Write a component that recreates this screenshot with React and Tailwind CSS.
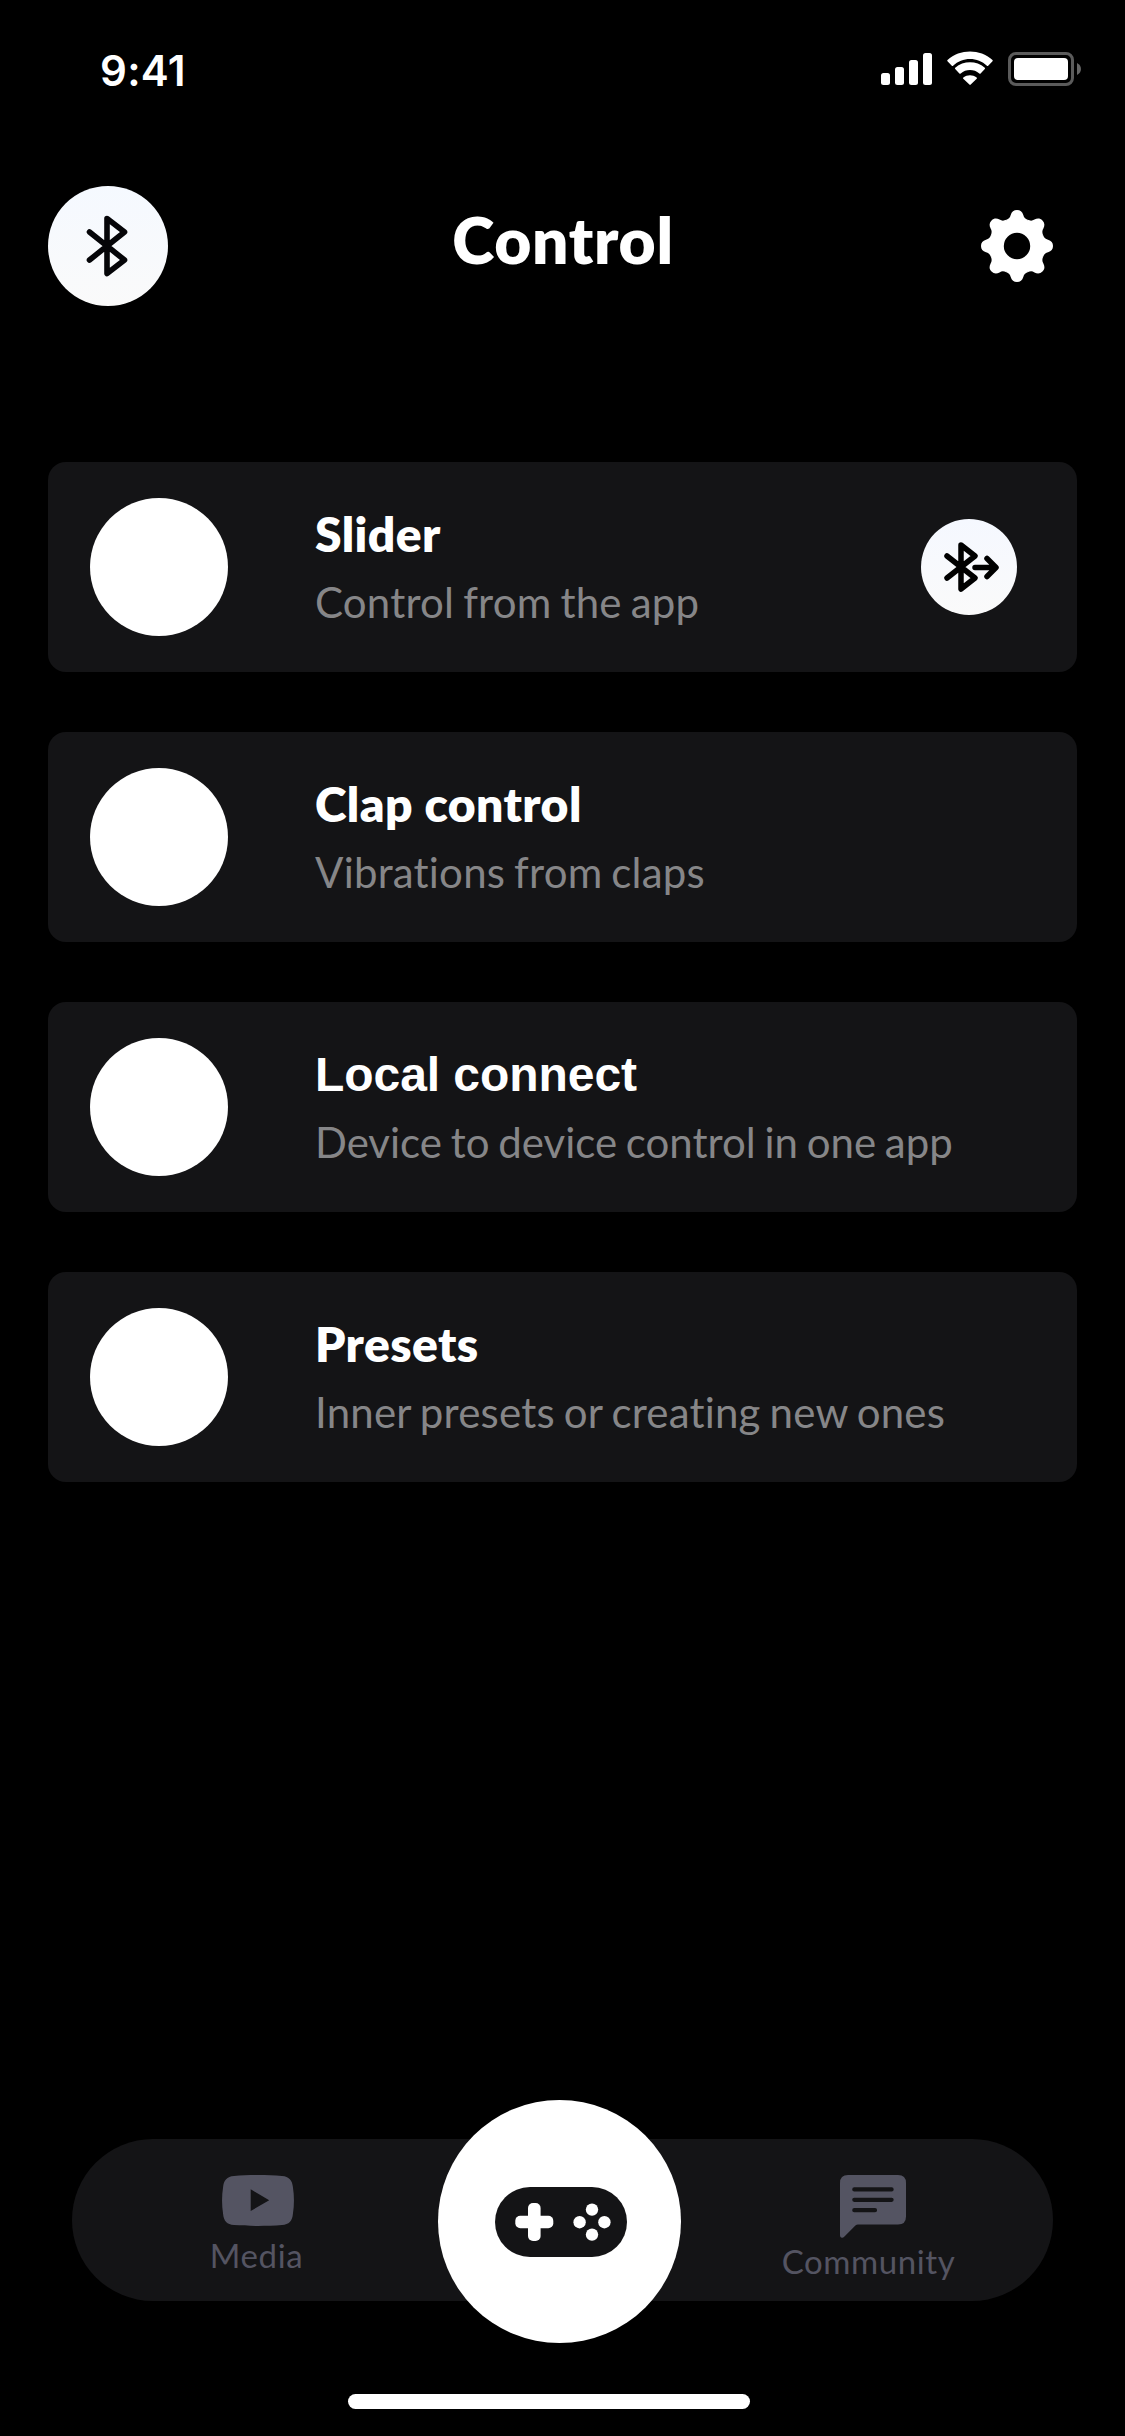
const CARDS = [
  { title: "Slider", text: "Control from the app", linked: true },
  { title: "Clap control", text: "Vibrations from claps" },
  { title: "Local connect", text: "Device to device control in one app", grotesque: true },
  { title: "Presets", text: "Inner presets or creating new ones" },
];

function StatusBar() {
  return (
    <div className="flex h-[132px] items-start justify-between pl-[100px] pr-[44px]">
      <span className="mt-[46px] font-['Inter',sans-serif] text-[42px] font-semibold leading-[50px] tracking-[0.300px]">9:41</span>
      <svg className="mt-[48px] h-[42px] w-[204px]" viewBox="877 48 204 42" fill="white">
        <rect x="881" y="73" width="9" height="12" rx="2.5" />
        <rect x="895" y="67" width="9" height="18" rx="2.5" />
        <rect x="909" y="60" width="9" height="25" rx="2.5" />
        <rect x="923" y="53" width="9" height="32" rx="2.5" />
        <path d="M970 59c6.300 0 12.300 2.400 16.900 6.700.4.300.9.300 1.300 0l4.300-4.400c.4-.4.4-1 0-1.300-12.600-11.300-32.400-11.300-45 0-.4.300-.4.900 0 1.300l4.300 4.400c.4.300.9.300 1.300 0C957.700 61.400 963.700 59 970 59z" />
        <path d="M970 70c3.400 0 6.700 1.200 9.300 3.400.4.300.9.300 1.300 0l4.200-4.300c.4-.4.4-1 0-1.300-8.400-7.300-21.200-7.300-29.600 0-.4.300-.4.900 0 1.300l4.200 4.300c.4.300.9.300 1.300 0C963.300 71.200 966.600 70 970 70z" />
        <path d="M976.700 78.700c.4-.4.4-1-.1-1.300-3.900-2.900-9.300-2.900-13.200 0-.5.300-.5.900-.1 1.300l6.100 5.900c.4.400.9.400 1.300 0z" />
        <rect x="1009.500" y="53.500" width="63" height="31" rx="6.500" fill="none" stroke="#5b5b5b" strokeWidth="3" />
        <rect x="1014" y="58" width="54" height="22" rx="4" />
        <path d="M1077 63c5.300 2.500 5.300 9.500 0 12z" fill="#666" />
      </svg>
    </div>
  );
}

function Header() {
  return (
    <header className="mt-[54px] flex h-[120px] items-center justify-between pl-12 pr-[72px]">
      <button className="flex size-[120px] items-center justify-center rounded-full bg-linear-to-b from-[#f5f9ff] to-[#fafafa]">
        <svg className="size-[72px]" viewBox="0 0 72 72" fill="none" stroke="#050508" strokeWidth="5.600" strokeLinecap="round" strokeLinejoin="round">
          <path d="M17.500 22L52.500 50L35 63.500V8.500L52.500 22L17.500 50" />
        </svg>
      </button>
      <h1 className="mb-[12px] mr-[23px] font-['Lato',sans-serif] text-[64px] font-extrabold leading-[76px] tracking-[0.700px]">Control</h1>
      <svg className="size-[72px]" viewBox="-36 -36 72 72">
        <g fill="white">
          <circle r="26" />
          {[0, 45, 90, 135, 180, 225, 270, 315].map((a) => (
            <path key={a} transform={`rotate(${a})`} d="M-11-26C-8-27.300-7-28.500-6.300-31C-5.300-34.300-3.200-36 0-36S5.300-34.300 6.300-31C7-28.500 8-27.300 11-26L0 0z" />
          ))}
        </g>
        <circle r="13.200" fill="black" />
      </svg>
    </header>
  );
}

function ModeCard({ title, text, linked, grotesque }) {
  return (
    <button className="flex h-[210px] items-center rounded-[18px] bg-[#141416] pl-[42px] pr-[60px] text-left">
      <span className="size-[138px] shrink-0 rounded-full bg-white" />
      <span className="mb-[2px] ml-[87px] flex flex-1 flex-col whitespace-nowrap">
        {grotesque ? (
          <>
            <span className="pt-px font-['Liberation_Sans',sans-serif] text-[48px] font-bold leading-[71px] tracking-[-0.060px]">{title}</span>
            <span className="font-['Lato',sans-serif] text-[42px] leading-[64px] text-[#868688] [font-variant-ligatures:none] [word-spacing:-2px]">{text}</span>
          </>
        ) : (
          <>
            <span className="font-['Lato',sans-serif] text-[48px] font-extrabold leading-[72px] tracking-[0.400px]">{title}</span>
            <span className="font-['Lato',sans-serif] text-[42px] leading-[64px] tracking-[0.200px] text-[#868688] [font-variant-ligatures:none] [word-spacing:-2px]">{text}</span>
          </>
        )}
      </span>
      {linked && (
        <span className="flex size-24 items-center justify-center rounded-full bg-linear-to-b from-[#f5f8ff] to-[#fafafa]">
          <svg className="size-24" viewBox="921 519 96 96" fill="none" stroke="black" strokeWidth="5.500" strokeLinecap="round" strokeLinejoin="round">
            <path d="M947 556L975 578L961 589V545L975 556L947 578M975 567.500H995M987 558.500L996 567.500L987 576.500" />
          </svg>
        </span>
      )}
    </button>
  );
}

function MediaIcon() {
  return (
    <svg className="ml-[6px] h-[51px] w-[72px]" viewBox="0 0 72 51" fill="#545462">
      <path fillRule="evenodd" d="M12 .9C27-.3 45-.3 60 .9C67 1.500 70.300 5 70.900 12C72.300 21 72.300 30 70.900 39C70.300 46 67 49.500 60 50.100C45 51.300 27 51.300 12 50.100C5 49.500 1.700 46 1.100 39C-.3 30-.3 21 1.100 12C1.700 5 5 1.500 12 .9zM28.700 14.300V36L47.200 25.300z" />
    </svg>
  );
}

function CommunityIcon() {
  return (
    <svg className="ml-[12px] h-[63px] w-[66px]" viewBox="0 0 66 63">
      <path fill="#545462" d="M8 0H58Q66 0 66 8V41.500Q66 49.500 58 49.500H18Q16.500 49.500 15.400 50.600L4.200 61.800Q3 63 1.700 62.700Q0 62.500 0 60.500V8Q0 0 8 0z" />
      <path d="M14.300 14.400H51.600M14.300 24.800H51.600M14.300 35.200H35" stroke="#141416" strokeWidth="4.200" strokeLinecap="round" />
    </svg>
  );
}

function Gamepad() {
  return (
    <svg className="ml-[3px] mt-px h-[70px] w-[132px]" viewBox="495 2187 132 70">
      <rect x="495" y="2187" width="132" height="70" rx="35" fill="#141416" />
      <g fill="white">
        <rect x="528" y="2203" width="12.600" height="38" rx="5" />
        <rect x="515.300" y="2215.700" width="38" height="12.600" rx="5" />
        <circle cx="592" cy="2209.600" r="6.200" />
        <circle cx="592" cy="2234.600" r="6.200" />
        <circle cx="579.600" cy="2222.200" r="6.200" />
        <circle cx="604.400" cy="2222.200" r="6.200" />
      </g>
    </svg>
  );
}

export default function App() {
  return (
    <div className="flex h-[2436px] w-[1125px] flex-col bg-black text-white">
      <StatusBar />
      <Header />
      <main className="mt-[156px] flex flex-col gap-[60px] px-12">
        {CARDS.map((c) => (
          <ModeCard key={c.title} {...c} />
        ))}
      </main>
      <nav className="mx-[72px] mt-auto flex h-[162px] items-center rounded-full bg-[#141416] font-['Lato',sans-serif] text-[33px] leading-[40px] tracking-[0.600px] text-[#545462]">
        <button className="flex w-[366px] flex-col items-center self-start pt-9">
          <MediaIcon />
          <span className="ml-[3px] mt-[9px]">Media</span>
        </button>
        <button className="mt-[3px] flex size-[243px] items-center justify-center rounded-full bg-white">
          <Gamepad />
        </button>
        <button className="flex flex-1 flex-col items-center self-start pt-9">
          <CommunityIcon />
          <span className="ml-[3px] mt-[3px]">Community</span>
        </button>
      </nav>
      <div className="mb-[27px] ml-[348px] mt-[93px] h-[15px] w-[402px] rounded-full bg-white" />
    </div>
  );
}
